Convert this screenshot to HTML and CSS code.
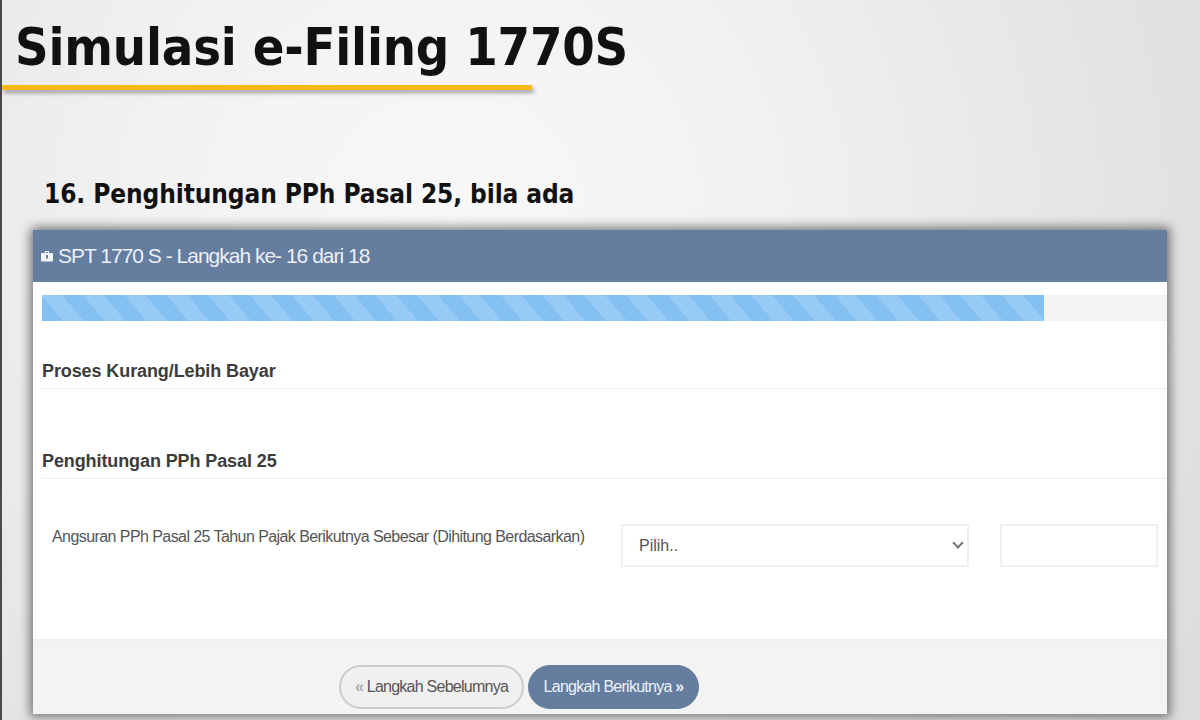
FILE: index.html
```html
<!DOCTYPE html>
<html lang="en">
<head>
    <meta charset="UTF-8">
    <meta name="viewport" content="width=device-width, initial-scale=1.0">
    <title>Simulasi e-Filing 1770S</title>
    <link rel="stylesheet" href="styles.css">
</head>
<body>
    <div class="slide">
        <h1 class="slide-title">Simulasi e-Filing 1770S</h1>
        <div class="title-rule"></div>
        <h2 class="slide-subtitle">16. Penghitungan PPh Pasal 25, bila ada</h2>

        <!-- Wizard panel -->
        <div class="panel">
            <div class="panel-heading">
                <svg class="panel-icon" viewBox="0 0 12 12" width="12" height="12">
                    <path fill="#f2f4f7" d="M4 3V1h4V3h3a1 1 0 0 1 1 1v6.5a1 1 0 0 1-1 1H1a1 1 0 0 1-1-1V4a1 1 0 0 1 1-1zM5 3h2V2H5zM5 5v3.5h2V5z"/>
                </svg>
                <span>SPT 1770 S - Langkah ke- 16 dari 18</span>
            </div>

            <div class="panel-body">
                <div class="progress">
                    <div class="progress-bar" style="width: 89.1%"></div>
                </div>

                <h3 class="section-title section-first">Proses Kurang/Lebih Bayar</h3>
                <h3 class="section-title section-second">Penghitungan PPh Pasal 25</h3>

                <div class="form-row">
                    <label class="form-label" for="dasar">Angsuran PPh Pasal 25 Tahun Pajak Berikutnya Sebesar (Dihitung Berdasarkan)</label>
                    <div class="select-wrap">
                        <select id="dasar" class="form-select">
                            <option>Pilih..</option>
                        </select>
                    </div>
                    <input type="text" class="form-input">
                </div>
            </div>

            <div class="panel-footer">
                <button class="btn btn-prev"><span class="btn-arrow">«</span> Langkah Sebelumnya</button>
                <button class="btn btn-next">Langkah Berikutnya <span class="btn-arrow">»</span></button>
            </div>
        </div>
    </div>
</body>
</html>
```

FILE: styles.css
```css
html, body {
    margin: 0;
    height: 100%;
    overflow: hidden;
}

.slide {
    box-sizing: border-box;
    height: 720px;
    padding-top: 17px;
    border-left: 2px solid #4a4a4a;
    background: radial-gradient(circle at 450px 220px, #f8f8f8 0, #f2f2f2 300px, #e1e1e1 750px, #d8d8da 1000px);
    font-family: "DejaVu Sans", sans-serif;
    font-stretch: condensed;
    color: #111;
}

.slide-title {
    margin: 0 0 0 13px;
    font-size: 52px;
    line-height: 60px;
    font-weight: bold;
    letter-spacing: -0.2px;
    white-space: nowrap;
}

.title-rule {
    width: 530px;
    height: 5px;
    margin-top: 8px;
    background-color: #fdb913;
    box-shadow: 2px 3px 4px rgba(0, 0, 0, 0.35);
}

.slide-subtitle {
    margin: 87px 0 0 42px;
    font-size: 26px;
    line-height: 34px;
    font-weight: bold;
    letter-spacing: -0.1px;
    white-space: nowrap;
}

.panel {
    width: 1134px;
    margin: 19px 0 0 31px;
    height: 484px;
    display: flex;
    flex-direction: column;
    background-color: #fff;
    border-radius: 3px 0 0 0;
    box-shadow: 0 0 11px 3px rgba(0, 0, 0, 0.5);
    font-family: "Liberation Sans", Arial, sans-serif;
    font-stretch: normal;
}

.panel-heading {
    height: 52px;
    flex: none;
    display: flex;
    align-items: center;
    gap: 5px;
    padding-left: 8px;
    background-color: #657d9e;
    color: #eceff4;
    font-size: 21px;
    letter-spacing: -1px;
}

.panel-body {
    flex: 1;
    padding: 13px 0 0 9px;
}

.progress {
    height: 26px;
    background-color: #f3f3f3;
}

.progress-bar {
    height: 100%;
    background-color: #85c0f3;
    background-image: repeating-linear-gradient(50deg, transparent 0, transparent 16px, #97caf5 16px, #97caf5 32px);
}

.section-title {
    margin: 0;
    padding-bottom: 7px;
    border-bottom: 1px solid #eeeeee;
    font-size: 18px;
    line-height: 20px;
    font-weight: bold;
    color: #3c3c3c;
    letter-spacing: -0.1px;
}

.section-first {
    margin-top: 40px;
}

.section-second {
    margin-top: 62px;
}

.form-row {
    display: flex;
    align-items: flex-start;
    margin-top: 45px;
    padding-left: 10px;
}

.form-label {
    width: 569px;
    flex: none;
    margin-top: 3px;
    font-size: 16px;
    line-height: 20px;
    color: #555;
    letter-spacing: -0.57px;
    white-space: nowrap;
}

.select-wrap {
    position: relative;
    width: 348px;
    height: 43px;
}

/* chevron drawn over the select */
.select-wrap::after {
    content: "";
    position: absolute;
    right: 7px;
    top: 15px;
    width: 6px;
    height: 6px;
    border-right: 2px solid #777;
    border-bottom: 2px solid #777;
    transform: rotate(45deg);
    pointer-events: none;
}

.form-select {
    box-sizing: border-box;
    appearance: none;
    width: 100%;
    height: 43px;
    padding-left: 16px;
    background-color: #fff;
    border: 2px solid #f0f0f0;
    border-radius: 0;
    font-family: inherit;
    font-size: 16px;
    color: #555;
}

.form-input {
    box-sizing: border-box;
    width: 158px;
    height: 43px;
    margin-left: 31px;
    border: 2px solid #f0f0f0;
    background-color: #fff;
}

.panel-footer {
    height: 75px;
    flex: none;
    display: flex;
    align-items: flex-start;
    gap: 4px;
    padding: 24px 0 0 306px;
    box-sizing: border-box;
    background-color: #f3f3f3;
    border-top: 2px solid #eeeeee;
}

.btn {
    box-sizing: border-box;
    height: 44px;
    padding: 0;
    border-radius: 22px;
    font-family: inherit;
    font-size: 16px;
    letter-spacing: -0.75px;
    white-space: nowrap;
}

.btn-prev {
    width: 185px;
    background-color: #f0f0f0;
    border: 2px solid #cccccc;
    color: #555;
}

.btn-prev .btn-arrow {
    color: #aaa;
    font-weight: bold;
}

.btn-next {
    width: 171px;
    background-color: #657d9e;
    border: 1px solid #657d9e;
    color: #eef1f5;
}

.btn-next .btn-arrow {
    font-weight: bold;
}
```
